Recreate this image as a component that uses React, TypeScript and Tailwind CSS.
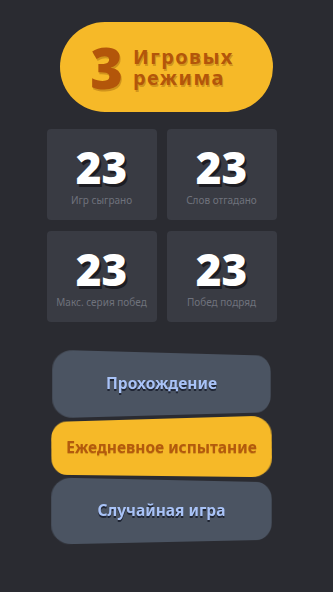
import React from "react";

const stats = [
  { value: 23, label: "Игр сыграно" },
  { value: 23, label: "Слов отгадано" },
  { value: 23, label: "Макс. серия побед" },
  { value: 23, label: "Побед подряд" },
];

function ModeButton({
  label,
  shape,
  tone,
  height,
}: {
  label: string;
  shape: string;
  tone: "slate" | "yellow";
  height: string;
}) {
  const bg = tone === "yellow" ? "bg-[#f6b928]" : "bg-[#4b5462]";
  const text =
    tone === "yellow"
      ? "text-[#b35a0d] [text-shadow:0_1px_0_rgba(120,60,0,0.25)]"
      : "text-[#a9c3f7] [text-shadow:0_1.5px_0_rgba(20,25,40,0.8)]";
  return (
    <button type="button" className={`relative flex w-[220px] items-center justify-center ${height}`}>
      {/* wobbly hand-drawn backdrop */}
      <span aria-hidden className={`absolute inset-y-0 -inset-x-[2px] rounded-[18px] ${bg} ${shape}`} />
      <span className={`relative text-[15.5px] font-bold ${text}`}>{label}</span>
    </button>
  );
}

export default function App() {
  return (
    <div
      className="flex min-h-[592px] w-full flex-col items-center bg-[#2a2b31]"
      style={{ fontFamily: '"Noto Sans", Inter, sans-serif' }}
    >
      {/* Header pill */}
      <div className="mt-[22px] flex h-[90px] w-[213px] items-center justify-center gap-[10px] rounded-full bg-[#f6b928] pr-[9px]">
        <span className="text-[56px] font-black leading-none text-[#b3560a] [text-shadow:1px_2px_0_rgba(120,60,0,0.3)]">
          3
        </span>
        <div className="flex flex-col text-[20px] font-bold leading-[21px] tracking-[1.4px] text-[#b3560a] [text-shadow:1px_1.5px_0_rgba(120,60,0,0.3)]">
          <span>Игровых</span>
          <span>режима</span>
        </div>
      </div>

      {/* Stats grid */}
      <div className="mr-[10px] mt-[17px] grid w-[230px] grid-cols-2 gap-x-[10px] gap-y-[11px]">
        {stats.map((s, i) => (
          <div key={i} className="flex h-[91px] flex-col items-center rounded-[4px] bg-[#393b43] pt-[18px]">
            <span className="text-[44px] font-black leading-[40px] text-white [text-shadow:2px_3px_0_rgba(15,15,20,0.7)]">
              {s.value}
            </span>
            <span className="mt-[7px] text-[10px] leading-[12px] text-[#6f727c]">{s.label}</span>
          </div>
        ))}
      </div>

      {/* Mode buttons */}
      <div className="mr-[10px] mt-[31px] flex flex-col gap-[4px]">
        <ModeButton
          label="Прохождение"
          tone="slate"
          height="h-[62px]"
          shape="[transform:translateX(10px)_perspective(300px)_rotateY(15deg)]"
        />
        <ModeButton
          label="Ежедневное испытание"
          tone="yellow"
          height="h-[57px]"
          shape="[transform:translateX(-9px)_perspective(300px)_rotateY(-12deg)_rotate(-0.5deg)]"
        />
        <ModeButton
          label="Случайная игра"
          tone="slate"
          height="h-[62px]"
          shape="[transform:translateX(8px)_perspective(300px)_rotateY(12deg)]"
        />
      </div>
    </div>
  );
}
